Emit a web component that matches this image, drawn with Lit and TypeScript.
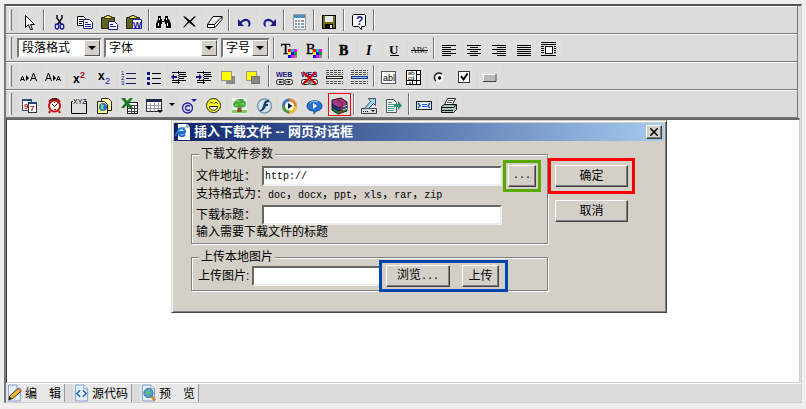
import { LitElement, html, css, svg, nothing } from "lit";
import { customElement, property } from "lit/decorators.js";

const palette = svg`<rect x="9" y="11" width="9" height="9" fill="#000"/>
  <rect x="9" y="11" width="3" height="3" fill="#f00"/><rect x="12" y="11" width="3" height="3" fill="#0cc"/><rect x="15" y="11" width="3" height="3" fill="#f0f"/>
  <rect x="9" y="14" width="3" height="3" fill="#ff0"/><rect x="12" y="14" width="3" height="3" fill="#00f"/><rect x="15" y="14" width="3" height="3" fill="#093"/>
  <rect x="9" y="17" width="3" height="3" fill="#00f"/><rect x="12" y="17" width="3" height="3" fill="#f0f"/><rect x="15" y="17" width="3" height="3" fill="#888"/>`;

const clipboard = svg`<path d="M2.500 7.500h13v11h-13z" fill="#63631a" stroke="#222"/>
  <path d="M5.500 8.500v-2h2v-1h3v1h2v2z" fill="#ee4" stroke="#331"/>`;

const chain = svg`<g fill="none" stroke="#222"><rect x="2.500" y="13.500" width="8" height="5" rx="2"/><rect x="10.500" y="13.500" width="8" height="5" rx="2"/><path d="M5 16h11" stroke-width="2"/></g>
  <path d="M7 16h7" stroke="#eee"/>`;

const dashes = (y: number) => svg`<path d="M2 ${y}.5h17" stroke="#555" stroke-dasharray="3 1"/>`;

const icons: Record<string, unknown> = {
  cursor: svg`<path d="M6.500 5.500v12l3-3 2 5h2l-2-5h4z" fill="#fff" stroke="#000"/>`,
  cut: svg`<path d="M8 5v3l4 6M13 5v3l-4 6" fill="none" stroke="#000" stroke-width="1.400"/><g fill="none" stroke="#1a1a9c" stroke-width="1.300"><ellipse cx="8" cy="16.500" rx="1.800" ry="2.500"/><ellipse cx="13" cy="16.500" rx="1.800" ry="2.500"/></g>`,
  copy: svg`<path d="M3.500 6.500h6l2 2v7h-8z" fill="#fff" stroke="#000"/><path d="M5 9.500h4M5 11.500h4M5 13.500h3" stroke="#000"/><path d="M9.500 9.500h6l3 3v6h-9z" fill="#fff" stroke="#1a1a8c"/><path d="M11 12.500h3M11 14.500h6M11 16.500h6" stroke="#1a1a8c"/>`,
  paste: svg`${clipboard}<path d="M9.500 11.500h6l3 3v5h-9z" fill="#fff" stroke="#1a1a8c"/><path d="M11 14.500h3M11 16.500h6" stroke="#1a1a8c"/>`,
  pasteWord: svg`${clipboard}<path d="M8.500 9.500h9v9h-9z" fill="#fff" stroke="#22a"/><text x="9" y="18" font-size="9" font-weight="700" fill="#118">W</text>`,
  find: svg`<path d="M4 6h3v3h1v2h2v-2h1V6h3v3h1l2 5v4h-5v-4h-1v-2h-3v2H7v4H2v-4l2-5z" fill="#000"/><path d="M5.500 8v2M12.500 8v2M4.500 13v3M13.500 13v3" stroke="#fff"/>`,
  remove: svg`<path d="M4 6.500h2l5 4 4-4h2l-5 5 5 5h-2l-5-4-5 5H4l5-6z" fill="#000"/>`,
  eraser: svg`<path d="M9 6.500h9v3l-7 8H3.500v-3zM3.500 14.500h7l7.500-8M10.500 14.500v3" fill="#fff" stroke="#000"/>`,
  undo: svg`<path d="M4 9v7h6l-2.500-2.500c3-3.500 7-3 7 0 0 1 0 2-1 3h2c3-4-1-9-5-7.500-1.500 0-3 1.500-4 2.500z" fill="#1a1a8c"/>`,
  redo: svg`<path d="M17 9v7h-6l2.500-2.500c-3-3.500-7-3-7 0 0 1 0 2 1 3h-2c-3-4 1-9 5-7.500 1.500 0 3 1.500 4 2.500z" fill="#1a1a8c"/>`,
  calc: svg`<rect x="4.500" y="4.500" width="12" height="15" fill="#f4f8fb" stroke="#99a"/><rect x="5" y="5" width="11" height="3" fill="#4a90c0"/><g fill="#8899a8"><path d="M6 10h2v2h-2zM9 10h2v2h-2zM12 10h3v2h-3zM6 13h2v2h-2zM9 13h2v2h-2zM12 13h3v2h-3zM6 16h2v2h-2zM9 16h2v2h-2zM12 16h3v2h-3z"/></g>`,
  save: svg`<rect x="3.500" y="5.500" width="13" height="13" fill="#6d6d10" stroke="#000"/><rect x="6" y="6" width="8" height="6" fill="#e8e8e8"/><rect x="6" y="14" width="8" height="5" fill="#000"/><rect x="11" y="15" width="2" height="3" fill="#eee"/>`,
  help: svg`<path d="M4.500 4.500h11l1 1v10l-1 1h-3v3l-3-3h-5l-1-1v-10z" fill="#fff" stroke="#000"/><text x="7" y="15" font-size="12" font-weight="700" fill="#1a1a9c">?</text>`,
  fore: svg`<text class="serif" x="2" y="16" font-size="15" stroke="#000" stroke-width=".4">T</text>${palette}`,
  back: svg`<text class="serif" x="2" y="16" font-size="14" stroke="#000" stroke-width=".4">B</text>${palette}`,
  bold: svg`<text class="serif" x="5" y="17" font-size="14" font-weight="700" stroke="#000" stroke-width=".5">B</text>`,
  italic: svg`<text class="serif" x="7" y="17" font-size="14" font-weight="700" font-style="italic">I</text>`,
  underline: svg`<text class="serif" x="5" y="16" font-size="13" font-weight="700">U</text><path d="M6 17.500h9" stroke="#000"/>`,
  strike: svg`<text class="serif" x="2" y="15" font-size="8">ABC</text><path d="M2 12.500h17" stroke="#000"/>`,
  left: svg`<path d="M3 7.500h14M3 9.500h9M3 11.500h14M3 13.500h9M3 15.500h14M3 17.500h9" stroke="#000"/>`,
  center: svg`<path d="M3 7.500h14M6 9.500h8M3 11.500h14M6 13.500h8M3 15.500h14M6 17.500h8" stroke="#000"/>`,
  right: svg`<path d="M3 7.500h14M8 9.500h9M3 11.500h14M8 13.500h9M3 15.500h14M8 17.500h9" stroke="#000"/>`,
  justify: svg`<path d="M3 7.500h14M3 9.500h14M3 11.500h14M3 13.500h14M3 15.500h14M3 17.500h14" stroke="#000"/>`,
  wrap: svg`<path d="M2 4.500h15M2 6.500h15M2 17.500h15M2 8.500h3M2 10.500h3M2 12.500h3M2 14.500h3M15 8.500h2M15 10.500h2M15 12.500h2M15 14.500h2" stroke="#000"/><rect x="6.500" y="8.500" width="7" height="7" fill="#fff" stroke="#000"/>`,
  bigger: svg`<path d="M1.500 15l2-5 2 5M2 13.500h3M11.500 15l3-8 3 8M12.500 12.500h4" fill="none" stroke="#000"/><path d="M7 9l3 3-3 3z"/>`,
  smaller: svg`<path d="M1.500 15l3-8 3 8M2.500 12.500h4M12.500 15l2-5 2 5M13 13.500h3" fill="none" stroke="#000"/><path d="M9 9l3 3-3 3z"/>`,
  sup: svg`<text x="4" y="17" font-size="12" font-weight="700">x</text><text x="11" y="12" font-size="9" font-weight="700" fill="#a11">2</text>`,
  sub: svg`<text x="4" y="14" font-size="12" font-weight="700">x</text><text x="11" y="18" font-size="9" fill="#11b">2</text>`,
  ol: svg`<g fill="#118"><text x="2" y="9" font-size="6">1</text><text x="2" y="14" font-size="6">2</text><text x="2" y="19" font-size="6">3</text></g><path d="M7 7.500h10M7 12.500h10M7 17.500h10" stroke="#1a1a60"/>`,
  ul: svg`<path d="M3 6h3v3h-3zM3 11h3v3h-3zM3 16h3v3h-3z" fill="#118"/><path d="M8 7.500h9M8 12.500h9M8 17.500h9" stroke="#000"/>`,
  outdent: svg`<path d="M2 11l3-3v2h3v2h-3v2z" fill="#118"/><path d="M3 6.500h14M10 8.500h7M10 10.500h8M10 12.500h5M3 14.500h14M3 16.500h8" stroke="#000"/><path d="M9.500 5v14" stroke="#000" stroke-dasharray="1 1"/>`,
  indent: svg`<path d="M8 11l-3-3v2h-3v2h3v2z" fill="#118"/><path d="M3 6.500h14M10 8.500h7M10 10.500h8M10 12.500h5M3 14.500h14M3 16.500h8" stroke="#000"/><path d="M9.500 5v14" stroke="#000" stroke-dasharray="1 1"/>`,
  front: svg`<rect x="7" y="10" width="9" height="8" fill="#888"/><rect x="2.500" y="5.500" width="10" height="9" fill="#ff0" stroke="#997"/>`,
  behind: svg`<rect x="2.500" y="5.500" width="10" height="9" fill="#ff0" stroke="#997"/><rect x="7.500" y="10.500" width="8" height="7" fill="#888" stroke="#777"/>`,
  link: svg`<text x="2" y="11" font-size="7" font-weight="700" fill="#12127a">WEB</text>${chain}`,
  unlink: svg`<text x="2" y="11" font-size="7" font-weight="700" fill="#12127a">WEB</text>${chain}<path d="M4 6l13 12M17 6L4 18" stroke="#d00" stroke-width="2"/>`,
  hr: svg`${dashes(4)}${dashes(6)}${dashes(8)}<rect x="2.500" y="10.500" width="16" height="2" fill="#fff" stroke="#222"/>${dashes(15)}${dashes(17)}`,
  hr2: svg`${dashes(4)}${dashes(6)}${dashes(8)}<rect x="2.500" y="10.500" width="16" height="2" fill="#9be" stroke="#123a80"/>${dashes(15)}${dashes(17)}`,
  text: svg`<rect x="2.500" y="5.500" width="14" height="12" fill="#fff" stroke="#555"/><text x="4" y="15" font-size="9">abl</text>`,
  area: svg`<rect x="2.500" y="4.500" width="14" height="14" fill="#fff" stroke="#000"/><path d="M12.500 4v15M2 14.500h15M12 8.500h5M8.500 15v4M5 17h2" stroke="#000"/><text x="4" y="9" font-size="6">ab</text><text x="4" y="14" font-size="6">cd</text>`,
  radio: svg`<circle cx="10" cy="12" r="4" fill="#fff"/><path d="M7 15a4.500 4.500 0 0 1 6-7" fill="none" stroke="#222" stroke-width="1.500"/><circle cx="10.500" cy="12" r="1.800"/>`,
  check: svg`<rect x="4.500" y="5.500" width="11" height="11" fill="#fff" stroke="#333"/><path d="M7 10l2.500 3.500 4-6" fill="none" stroke="#000" stroke-width="2"/>`,
  button: svg`<path d="M4 15.500h13V8" stroke="#444" fill="none"/><rect x="4" y="8" width="12" height="7" fill="#bbb"/><path d="M4 8.500h12M4.500 8v7" stroke="#fff"/>`,
  date: svg`<rect x="3.500" y="5.500" width="9" height="11" fill="#fff" stroke="#446"/><path d="M3 6h10" stroke="#257" stroke-width="2"/><text x="5" y="15" font-size="8" font-weight="700" fill="#a22">9</text><rect x="9.500" y="8.500" width="8" height="10" fill="#fff" stroke="#333"/><path d="M9 9h9" stroke="#247" stroke-width="2"/><text x="11" y="17" font-size="8" font-weight="700" fill="#a22">7</text>`,
  clock: svg`<path d="M5 8l3-3M16 8l-3-3M6 17l-1 2M15 17l1 2" stroke="#a11" stroke-width="2"/><path d="M8 5h5" stroke="#222" stroke-width="2"/><circle cx="10.500" cy="12" r="5.500" fill="#fff" stroke="#c11" stroke-width="2"/><path d="M8 10l2.500 2.500 3-3" fill="none" stroke="#000"/><path d="M10 15.500h2M10 8.500h1" stroke="#c11"/>`,
  xyz: svg`<path d="M4 7.500h-1.500v12h15v-12h-1.500" fill="none" stroke="#000"/><text x="4" y="10" font-size="7">XYZ</text>`,
  fragment: svg`<path d="M7.500 4.500h7l3 3v9h-10z" fill="#ffa" stroke="#222"/><path d="M3.500 7.500h7l3 3v9h-10z" fill="#ff8" stroke="#222"/><circle cx="9" cy="13" r="4" fill="#36c"/><path d="M7 10l3 1-1 3 2 2-4-1z" fill="#7d7"/>`,
  excel: svg`<rect x="8.500" y="8.500" width="10" height="11" fill="#fff" stroke="#222"/><path d="M9 11.500h9M9 14.500h9M9 17.500h9M12.500 12v7M15.500 12v7" stroke="#444"/><path d="M2 4h4l2 3 3-3h3l-4 5 4 5h-4l-2-3-3 3H2l4-5z" fill="#187a24"/>`,
  table: svg`<rect x="2.500" y="5.500" width="15" height="12" fill="#fff" stroke="#333"/><rect x="2" y="5" width="16" height="3" fill="#225"/><path d="M3 11.500h14M3 14.500h14M6.500 9v8M10.500 9v8M14.500 9v8" stroke="#99a"/><path d="M13 16h6l-3 3z" fill="#000"/>`,
  copyright: svg`<circle cx="8.500" cy="14" r="5" fill="none" stroke="#22a" stroke-width="1.300"/><path d="M11 12.500a2.500 2.500 0 1 0 0 3" fill="none" stroke="#22a" stroke-width="1.300"/><path d="M12 5h6l-3 3z" fill="#22a"/>`,
  smile: svg`<circle cx="9.500" cy="11.500" r="7" fill="#ff2" stroke="#222"/><path d="M6 9.500l1.500-1.500 1.500 1.500M10.500 9.500l1.500-1.500 1.500 1.500" fill="none" stroke="#222"/><path d="M5.500 12.500h8c0 5-8 5-8 0z" fill="#fff" stroke="#222"/>`,
  image: svg`<rect x="3" y="4" width="15" height="16" fill="#e8f4f8"/><path d="M3 16h15v3H3z" fill="#8c5"/><path d="M9 12h3l1 6H8z" fill="#853"/><path d="M5 8l4-3 5 0 3 4-1 4-5 1-6-1-1-3z" fill="#4aaa3c"/><path d="M8 7h3M12 10h3M6 11h3" stroke="#9d5"/>`,
  flash: svg`<circle cx="10.500" cy="12" r="7" fill="#d5e4ea" stroke="#7a99aa" stroke-width="1.500"/><path d="M15 6c-5 0-5 3-6 6-1 3-2 4-4 5 5 1 6-3 7-5h2v-2h-2c0-1 1-2 3-2z" fill="#0a3f66"/>`,
  media: svg`<circle cx="10.500" cy="12" r="7.500" fill="#e6842a"/><path d="M10.500 4.500a7.500 7.500 0 0 0-7.500 7.500h7.500z" fill="#3d75c9"/><path d="M3 12a7.500 7.500 0 0 0 7.500 7.500V12z" fill="#4a9a3a"/><path d="M10.500 19.500A7.500 7.500 0 0 0 18 12h-7.500z" fill="#edbd28"/><circle cx="10.500" cy="12" r="4.500" fill="#fff"/><path d="M9 9l4.500 3-4.500 3z" fill="#123"/>`,
  bubble: svg`<path d="M3 12c0-7 15-7 15 0 0 3-3 5-6 5l-2 3v-3c-4 0-7-2-7-5z" fill="#2673cf" stroke="#124d9a"/><path d="M6 9c2-2 5-2 8-1" stroke="#9cf" fill="none"/><path d="M9 9l4 3-4 3z" fill="#fff"/>`,
  rar: svg`<path d="M3 6l9-2 6 4v3l-9 3-6-4z" fill="#a3388f" stroke="#312"/><path d="M3 10l6 4 9-3v3l-9 3-6-4z" fill="#2340a8" stroke="#112"/><path d="M3 13l6 4 9-3v3l-9 3-6-4z" fill="#258040" stroke="#121"/><path d="M7 5l6 4v10" fill="none" stroke="#982b38" stroke-width="2"/><path d="M14 12.500l4-1M14 15.500l4-1" stroke="#ddd"/>`,
  upload: svg`<path d="M2.500 14.500h15v5h-15z" fill="#ddd" stroke="#444"/><path d="M9.500 4.500h7v7l-2-2-5 5h-4l6-7z" fill="#9bd5e8" stroke="#456"/><path d="M12 16h4l-2 2z" fill="#000"/><path d="M4 17.500h6" stroke="#000" stroke-dasharray="1 1"/>`,
  exportDoc: svg`<path d="M2.500 5.500h7l3 3v10h-10z" fill="#f6faf6" stroke="#555"/><path d="M4 8.500h4M4 10.500h6M4 12.500h6M4 14.500h6M4 16.500h6" stroke="#599"/><path d="M10 10h4V7l4 4.500-4 4.500v-3h-4z" fill="#2f8f74"/>`,
  page: svg`<rect x="2.500" y="7.500" width="15" height="8" fill="#eef4ff" stroke="#222"/><path d="M4 9l2 3-2 2M16 9l-2 3 2 2" fill="none" stroke="#25d" stroke-width="1.500"/><path d="M8 10.500h5M8 12.500h5" stroke="#25d"/>`,
  print: svg`<path d="M5.500 10.500l3-6h8l-3 6z" fill="#fff" stroke="#222"/><path d="M9 6.500h5M8 8.500h5" stroke="#555"/><path d="M2.500 12.500l3-2h12v5l-3 3h-12z" fill="#a5c5bb" stroke="#111"/><path d="M3 13.500h12l2-3M3 16.500h11" fill="none" stroke="#111"/>`,
};

const SEP = "|";

const labels: Record<string, string> = {
  cursor: "选择", cut: "剪切", copy: "复制", paste: "粘贴", pasteWord: "从Word粘贴", find: "查找", remove: "删除", eraser: "清除格式",
  undo: "撤消", redo: "重做", calc: "计算器", save: "保存", help: "帮助", fore: "字体颜色", back: "背景颜色", bold: "粗体", italic: "斜体",
  underline: "下划线", strike: "删除线", left: "左对齐", center: "居中", right: "右对齐", justify: "两端对齐", wrap: "环绕", rar: "下载文件",
};

const rows: { selects?: [string, string][]; items: string[] }[] = [
  { items: ["cursor", SEP, "cut", "copy", "paste", "pasteWord", SEP, "find", "remove", "eraser", SEP, "undo", "redo", SEP, "calc", SEP, "save", SEP, "help", SEP] },
  { selects: [["段落格式", "w-format"], ["字体", "w-font"], ["字号", "w-size"]], items: [SEP, "fore", "back", SEP, "bold", "italic", "underline", "strike", SEP, "left", "center", "right", "justify", "wrap"] },
  { items: ["bigger", "smaller", "sup", "sub", "ol", "ul", "outdent", "indent", "front", "behind", SEP, "link", "unlink", "hr", "hr2", SEP, "text", "area", "radio", "check", "button"] },
  { items: ["date", "clock", "xyz", "fragment", "excel", "table", "more", "copyright", "smile", "image", "flash", "media", "bubble", "rar", SEP, "upload", "exportDoc", SEP, "page", "print"] },
];

@customElement("tool-button")
class ToolButton extends LitElement {
  @property() name = "";
  @property({ type: Boolean }) marked = false;
  static styles = css`
    :host { display: flex; flex: none; }
    button { width: 23px; height: 23px; margin: 0 1px; padding: 0; border: 1px solid #e2ddd6; background: #dedede; display: flex; }
    .marked { border-color: #f00; }
    svg { width: 21px; height: 21px; display: block; font-family: "Liberation Sans", sans-serif; }
    .serif { font-family: "Liberation Serif", serif; }
  `;
  render() {
    return html`<button type="button" class=${this.marked ? "marked" : ""} aria-label=${labels[this.name] ?? this.name}>
      <svg viewBox="0 0 21 21" aria-hidden="true">${icons[this.name]}</svg>
    </button>`;
  }
}

@customElement("tool-bars")
class ToolBars extends LitElement {
  static styles = css`
    :host { display: block; border-right: 1px solid #777; margin-right: 3px; }
    .bar { display: flex; align-items: center; box-sizing: border-box; height: 28px; padding-left: 2px; background: #dbdbdb; border-top: 1px solid #fff; border-bottom: 1px solid #777; }
    .grip { width: 3px; height: 22px; margin: 0 5px 0 1px; box-sizing: border-box; border-left: 1px solid #fff; border-right: 1px solid #777; flex: none; }
    .sep { width: 2px; height: 22px; margin: 0 2px 0 1px; box-sizing: border-box; border-left: 1px solid #777; border-right: 1px solid #fff; flex: none; }
    .selects { display: flex; gap: 2px; margin-right: 2px; }
    .pick { display: flex; position: relative; }
    select { appearance: none; height: 20px; width: 100%; margin: 0; padding: 0 18px 0 3px; border: 2px solid; border-color: #777 #eee #eee #777; border-radius: 0; background: #fff; color: #000; font: 12px/16px "Liberation Sans", "Noto Sans CJK SC", sans-serif; }
    .arrow { position: absolute; right: 2px; top: 2px; width: 16px; height: 16px; box-sizing: border-box; background: #d4d0c8; border: 1px solid; border-color: #fff #555 #555 #fff; display: grid; place-items: center; pointer-events: none; }
    .tri { border: 4px solid transparent; border-top-color: #000; border-bottom: 0; }
    .w-format { width: 85px; }
    .w-font { width: 115px; }
    .w-size { width: 49px; }
    .more { width: 10px; height: 23px; padding: 0; border: 0; background: none; display: grid; place-items: center; }
    .more .tri { border-width: 3px 3px 0; }
  `;
  item(name: string) {
    if (name === SEP) return html`<span class="sep"></span>`;
    if (name === "more") return html`<button type="button" class="more" aria-label="表格菜单"><span class="tri"></span></button>`;
    return html`<tool-button name=${name} ?marked=${name === "rar"}></tool-button>`;
  }
  render() {
    return rows.map(
      (row) => html`<div class="bar" role="toolbar">
        <span class="grip"></span>
        ${row.selects
          ? html`<div class="selects">
              ${row.selects.map(([label, width]) => html`<label class="pick ${width}"><select aria-label=${label}><option>${label}</option></select><span class="arrow"><span class="tri"></span></span></label>`)}
            </div>`
          : nothing}
        ${row.items.map((name) => this.item(name))}
      </div>`,
    );
  }
}

@customElement("download-dialog")
class DownloadDialog extends LitElement {
  static styles = css`
    :host { display: block; box-sizing: border-box; background: #d4d0c8; border: 1px solid; border-color: #d4d0c8 #444 #444 #d4d0c8; box-shadow: inset 1px 1px #fff, inset -1px -1px #808080; padding: 2px; color: #000; font: 12px/14px "Liberation Sans", "Noto Sans CJK SC", sans-serif; }
    .title { display: flex; align-items: center; gap: 3px; height: 18px; padding: 0 2px 0 1px; background: linear-gradient(to right, #0a246a, #a6caf0); color: #fff; }
    h1 { flex: 1; margin: 0; font-size: 13px; line-height: 18px; font-weight: 700; white-space: nowrap; }
    .ie { width: 16px; height: 16px; }
    button { box-sizing: border-box; padding: 0; border: 1px solid; border-color: #fff #404040 #404040 #fff; box-shadow: inset -1px -1px #808080; background: #d4d0c8; color: #000; font: inherit; white-space: nowrap; }
    .close { width: 16px; height: 14px; display: grid; place-items: center; }
    .body { display: flex; gap: 7px; padding: 6px 36px 19px 17px; }
    .sets { flex: 1; display: flex; flex-direction: column; gap: 6px; }
    fieldset { margin: 0; min-width: 0; border: 1px solid #808080; box-shadow: 1px 1px #fff, inset 1px 1px #fff; padding: 0 5px 4px 4px; }
    legend { padding: 0 2px; margin-left: 3px; background: #d4d0c8; }
    .row { display: flex; align-items: center; height: 20px; margin-top: 5px; white-space: nowrap; }
    .row.tight { margin-top: 2px; }
    .name { width: 66px; flex: none; }
    .name.short { width: 56px; padding-left: 2px; box-sizing: border-box; }
    .hint { margin: 0; height: 14px; white-space: nowrap; }
    input { box-sizing: border-box; height: 20px; min-width: 0; border: 2px solid; border-color: #666 #eee #eee #666; background: #fff; padding: 0 1px; outline: 0; }
    .wide { width: 240px; }
    .file { width: 130px; }
    .mono, input { font-family: "Liberation Mono", "Noto Sans CJK SC", monospace; font-size: 10px; }
    .comma { font-family: "Noto Sans CJK SC", sans-serif; font-size: 12px; }
    .dots { width: 28px; height: 22px; margin-left: 6px; outline: 3px solid #5aa800; outline-offset: 2px; }
    .pair { display: flex; gap: 12px; margin-left: 2px; padding: 0 4px 0 2px; outline: 3px solid #0046ad; outline-offset: 2px; }
    .pair button { height: 22px; }
    .browse { width: 64px; }
    .send { width: 37px; }
    .actions { display: flex; flex-direction: column; gap: 13px; width: 73px; padding-top: 18px; }
    .actions button { height: 22px; }
    .ok { outline: 3px solid #f00; outline-offset: 4px; }
  `;
  render() {
    const formats = ["doc", "docx", "ppt", "xls", "rar", "zip"];
    return html`
      <div class="title">
        <svg class="ie" viewBox="0 0 16 16" aria-hidden="true"><path d="M3 0h9l3 3v13H3z" fill="#fff"/><path d="M12 0v3h3" fill="none" stroke="#789"/><path d="M10 9.500H3.500a3.500 3.500 0 1 1 6.500-1.500H4M10 10.500a3.500 3.500 0 0 1-6 0" fill="none" stroke="#1c6fd0" stroke-width="2"/><path d="M1 12c-2-3 8-10 11-9" fill="none" stroke="#49b0ee"/></svg>
        <h1>插入下载文件 -- 网页对话框</h1>
        <button class="close" type="button" aria-label="关闭"><svg width="8" height="8" viewBox="0 0 8 8"><path d="M0 0l8 8M8 0L0 8" stroke="#000" stroke-width="1.500"/></svg></button>
      </div>
      <div class="body">
        <div class="sets">
          <fieldset>
            <legend>下载文件参数</legend>
            <div class="row"><label class="name" for="url">文件地址：</label><input class="wide" id="url" value="http://" /><button class="dots mono" type="button">...</button></div>
            <p class="hint">支持格式为：<span class="mono">${formats.map((f, i) => html`${i ? html`<span class="comma">，</span>` : nothing}${f}`)}</span></p>
            <div class="row"><label class="name" for="caption">下载标题：</label><input class="wide" id="caption" /></div>
            <p class="hint">输入需要下载文件的标题</p>
          </fieldset>
          <fieldset>
            <legend>上传本地图片</legend>
            <div class="row tight"><label class="name short" for="file">上传图片:</label><input class="file" id="file" /><span class="pair"><button class="browse" type="button">浏览<span class="mono">...</span></button><button class="send" type="button">上传</button></span></div>
          </fieldset>
        </div>
        <div class="actions"><button class="ok" type="button">确定</button><button type="button">取消</button></div>
      </div>
    `;
  }
}

const sheet = svg`<path d="M1.500.5h9l4 4v13h-13z" fill="#e4effc" stroke="#7d9cc8"/><path d="M10.500.5v4h4" fill="#fff" stroke="#7d9cc8"/>`;
const tabs = [
  { label: "编　辑", icon: svg`${sheet}<path d="M3 12l9-8 3 3-9 8-4 1z" fill="#f2b632" stroke="#3a3020"/><path d="M12 4l3 3" stroke="#d66" stroke-width="2"/><path d="M2 16l1-3 2 2z" fill="#000"/>` },
  { label: "源代码", icon: svg`${sheet}<path d="M6.500 6l-3.500 3.500 3.500 3.500M9.500 6l3.500 3.500L9.500 13" fill="none" stroke="#1a62b4" stroke-width="1.500"/>` },
  { label: "预　览", icon: svg`${sheet}<path d="M11 12l4 5" stroke="#d8862a" stroke-width="3"/><circle cx="8" cy="9" r="5" fill="#4aa3d8" stroke="#4a7896"/><path d="M5 7l4-1 1 3-3 3z" fill="#6cba58"/>` },
];

@customElement("app-root")
class AppRoot extends LitElement {
  static styles = css`
    :host { display: flex; flex-direction: column; box-sizing: border-box; min-height: 100vh; padding: 4px 4px 6px; background: #efefef; }
    .editor { flex: 1; display: flex; flex-direction: column; border: 1px solid #d4d0c8; border-top: 2px solid #555; border-left: 2px solid #777; background: #dbdbdb; }
    .canvas { flex: 1; position: relative; background: #fff; border-top: 2px solid #666; border-left: 1px solid #444; border-right: 1px solid #d4d0c8; border-bottom: 1px solid #d4d0c8; margin-right: 1px; min-height: 200px; }
    download-dialog { position: absolute; left: 164px; top: 0; width: 496px; }
    .tabs { display: flex; gap: 8px; height: 18px; border-top: 1px solid #fff; }
    .tab { display: flex; align-items: center; gap: 3px; box-sizing: border-box; width: 59px; height: 18px; padding: 0 1px; border: 0; border-right: 1px solid #999; background: #e8e8e8; color: #000; font: 12px/18px "Noto Sans CJK SC", sans-serif; white-space: nowrap; }
    .tab svg { width: 15px; height: 18px; flex: none; }
  `;
  render() {
    return html`<main class="editor">
      <tool-bars></tool-bars>
      <section class="canvas"><download-dialog role="dialog"></download-dialog></section>
      <nav class="tabs">${tabs.map((t) => html`<button class="tab" type="button"><svg viewBox="0 0 16 18" aria-hidden="true">${t.icon}</svg>${t.label}</button>`)}</nav>
    </main>`;
  }
}
